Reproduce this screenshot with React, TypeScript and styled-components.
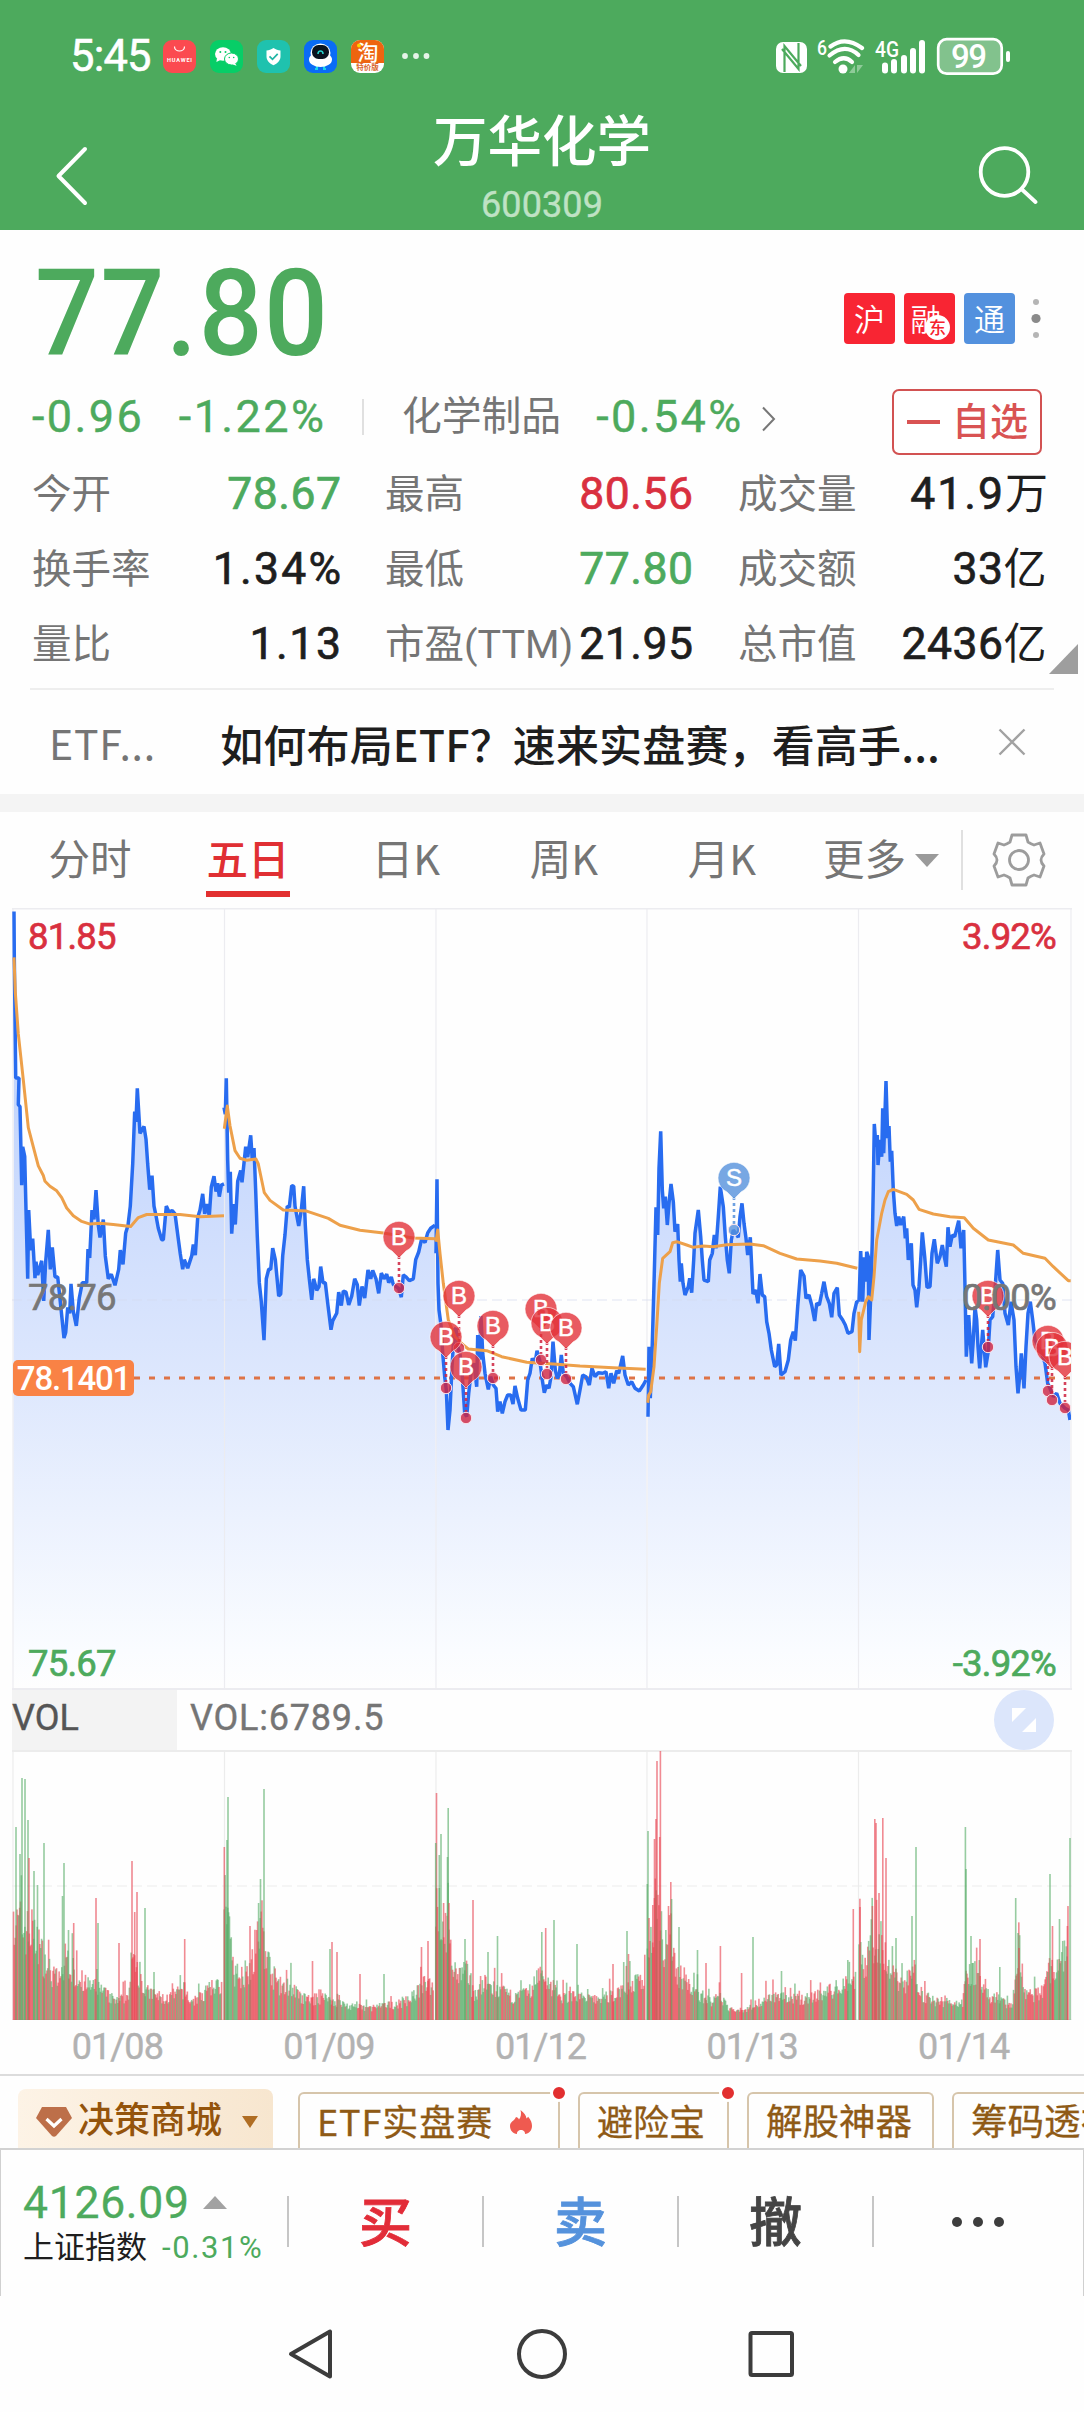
import React from "react";
import styled, { createGlobalStyle } from "styled-components";

const GREEN = "#4daa5d";
const RED = "#d9303f";
const INK = "#1e1e1e";
const GRAY = "#757575";
const NUM = `Roboto, "Noto Sans CJK SC", sans-serif`;
const HAN = `"Noto Sans CJK SC", Roboto, sans-serif`;

const Global = createGlobalStyle`
  * { box-sizing: border-box; }
  body { margin: 0; background: #fefefe; font-family: ${NUM}; }
  svg { display: block; flex: none; }
`;

const Screen = styled.main`
  width: 1084px;
  height: 2412px;
  overflow: hidden;
  display: flex;
  flex-direction: column;
  background: #fefefe;
`;

type TxtProps = {
  $size: number;
  $color?: string;
  $weight?: number;
  $ls?: number;
  $han?: boolean;
  $lh?: number;
  $stroke?: number;
  $ml?: number;
  $w?: number;
};

const Txt = styled.span<TxtProps>`
  font-family: ${(p) => (p.$han ? HAN : NUM)};
  font-size: ${(p) => p.$size}px;
  line-height: ${(p) => p.$lh ?? Math.round(p.$size * 1.2)}px;
  color: ${(p) => p.$color ?? INK};
  font-weight: ${(p) => p.$weight ?? 400};
  letter-spacing: ${(p) => p.$ls ?? 0}px;
  margin-left: ${(p) => p.$ml ?? 0}px;
  margin-right: ${(p) => -(p.$ls ?? 0)}px;
  ${(p) => (p.$w ? `width: ${p.$w}px;` : "")}
  -webkit-text-stroke: ${(p) => p.$stroke ?? 0}px currentColor;
  white-space: nowrap;
`;

/* ---------- header ---------- */

const Header = styled.header`
  height: 230px;
  flex: none;
  background: ${GREEN};
`;

const StatusBar = styled.div`
  height: 98px;
  padding: 15px 72px 0 70px;
  display: flex;
  align-items: center;
`;

const AppIcons = styled.div`
  display: flex;
  gap: 14px;
  margin-left: 12px;
`;

const StatusRight = styled.div`
  margin-left: auto;
`;

const TitleBar = styled.div`
  height: 132px;
  padding: 0 46px 0 54px;
  display: flex;
  justify-content: space-between;
`;

const TitleBlock = styled.div`
  display: flex;
  flex-direction: column;
  align-items: center;
  padding-top: 12px;
`;

const NavIcon = styled.div<{ $w: number }>`
  padding-top: 47px;
  width: ${(p) => p.$w}px;
`;

const AppIcon = ({ children }: { children: React.ReactNode }) => (
  <svg width="33" height="33" viewBox="0 0 33 33">{children}</svg>
);

function StatusIcons() {
  return (
    <>
      <AppIcons>
        <AppIcon>
          <rect width="33" height="33" rx="9" fill="#fb4a50" />
          <path d="M11.5 6.5c0 6 10 6 10 0" fill="none" stroke="#fff" strokeWidth="1.2" />
          <text x="16.5" y="21.5" textAnchor="middle" fontSize="5.6" fontWeight="700" fill="#fff" textLength="25" fontFamily="Roboto">HUAWEI</text>
        </AppIcon>
        <AppIcon>
          <rect width="33" height="33" rx="9" fill="#07ce67" />
          <ellipse cx="13" cy="14" rx="8" ry="6.8" fill="#fff" />
          <path d="M7 18l-.6 4 4-2z" fill="#fff" />
          <ellipse cx="21.5" cy="19" rx="7" ry="6" fill="#fff" stroke="#07ce67" strokeWidth="1" />
          <path d="M25 23l1.600 2.800-4.600-1.500z" fill="#fff" />
          <g fill="#07ce67"><circle cx="10.300" cy="12" r="1" /><circle cx="15.500" cy="12" r="1" /><circle cx="19.300" cy="17.500" r=".8" /><circle cx="23.700" cy="17.500" r=".8" /></g>
        </AppIcon>
        <AppIcon>
          <rect width="33" height="33" rx="9" fill="#1fc2ae" />
          <path d="M16.500 8c2.500 1.800 4.500 2.300 7 2.500v6c0 4-3 7-7 8.800-4-1.800-7-4.800-7-8.800v-6c2.500-.2 4.500-.7 7-2.500z" fill="#fff" />
          <path d="M12.500 16.300l3 3 5.200-5.500" fill="none" stroke="#1fb5a5" strokeWidth="1.700" />
        </AppIcon>
        <AppIcon>
          <rect width="33" height="33" rx="9" fill="#0a6cf6" />
          <path d="M13 25v4M20 25v4M11 29h3M19 29h3" stroke="#19d3e8" strokeWidth="2" />
          <ellipse cx="16.500" cy="13" rx="10" ry="9.500" fill="#fff" />
          <ellipse cx="16.500" cy="19.500" rx="11.500" ry="7.500" fill="#fff" />
          <rect x="8" y="5" width="17" height="14" rx="6.500" fill="#0b1420" />
          <path d="M14 14c0-4 5-4 5 0" fill="none" stroke="#27d5cf" strokeWidth="1.500" />
        </AppIcon>
        <AppIcon>
          <rect width="33" height="33" rx="9" fill="#fff" />
          <path d="M0 23V9a9 9 0 019-9h15a9 9 0 019 9v14z" fill="#ee6410" />
          <text x="17" y="20" textAnchor="middle" fontSize="21" fontWeight="500" fill="#fff" fontFamily="Noto Sans CJK SC">淘</text>
          <circle cx="8" cy="5.500" r="2" fill="#ffd400" />
          <text x="16.500" y="30" textAnchor="middle" fontSize="7.500" fontWeight="700" fill="#d9642a" fontFamily="Noto Sans CJK SC">特价版</text>
        </AppIcon>
        <svg width="40" height="33" viewBox="0 0 40 33" fill="#e6f4e8">
          <circle cx="7" cy="16" r="2.900" /><circle cx="18" cy="16" r="2.900" /><circle cx="28.500" cy="16" r="2.900" />
        </svg>
      </AppIcons>
      <StatusRight>
        <svg width="236" height="40" viewBox="776 36 236 40" fill="#fff">
          <rect x="776" y="41" width="31" height="31" rx="7" />
          <path d="M784.500 71V45l16.500 20M798.500 42v26l-16.500-20" fill="none" stroke={GREEN} strokeWidth="2.200" />
          <text x="817" y="54" fontSize="21" fontWeight="500" textLength="10" lengthAdjust="spacingAndGlyphs" fontFamily="Roboto">6</text>
          <g fill="none" stroke="#fff" strokeWidth="4.200" strokeLinecap="round">
            <path d="M830.500 45.500Q845 34.500 862 47" /><path d="M829.500 54.500Q845 41.500 858.500 54" /><path d="M835 61Q844 53.500 852 61" />
          </g>
          <circle cx="843" cy="68" r="4.500" />
          <path d="M855 64v8h-6zM857 72v-8l6 0z" fill="#8fcb99" />
          <text x="875" y="56" fontSize="22" fontWeight="500" textLength="24" lengthAdjust="spacingAndGlyphs" fontFamily="Roboto">4G</text>
          <rect x="882" y="61.500" width="6" height="11" rx="3" /><rect x="891" y="58" width="6" height="14.500" rx="3" />
          <rect x="901" y="54" width="6" height="18.500" rx="3" /><rect x="910" y="47" width="6" height="25.500" rx="3" />
          <rect x="919" y="39" width="6" height="33.500" rx="3" />
          <rect x="938.200" y="38.200" width="63.500" height="34.500" rx="8.500" fill="#82c28d" stroke="#fff" strokeWidth="2.700" />
          <rect x="1006" y="50" width="4" height="11" rx="2" />
          <text x="951" y="67" fontSize="33" fontWeight="500" textLength="36" fontFamily="Roboto">99</text>
        </svg>
      </StatusRight>
    </>
  );
}

/* ---------- quote ---------- */

const Quote = styled.section`
  height: 460px;
  flex: none;
  position: relative;
  padding: 0 38px 0 32px;
`;

const PriceRow = styled.div`
  height: 150px;
  display: flex;
  justify-content: space-between;
  align-items: flex-start;
`;

const Price = styled.div`
  margin-left: 3px;
  font: 500 121px/168px ${NUM};
  letter-spacing: 1.600px;
  color: ${GREEN};
  transform: scaleX(0.93);
  transform-origin: 0 50%;
`;

const Tags = styled.div`
  display: flex;
  gap: 9px;
  padding-top: 63px;
  margin-right: 2px;
`;

const Tag = styled.span<{ $bg: string; $shift?: number }>`
  position: relative;
  width: 51px;
  height: 51px;
  padding-right: ${(p) => p.$shift ?? 0}px;
  border-radius: 4px;
  background: ${(p) => p.$bg};
  color: #fff;
  font: 350 31px/50px ${HAN};
  text-align: center;
`;

const TagBadge = styled.i`
  position: absolute;
  left: 21px;
  top: 22px;
  width: 25px;
  height: 25px;
  border-radius: 50%;
  background: #fff;
  color: #f5222d;
  font: 500 17px/24px ${HAN};
`;

const ChangeRow = styled.div`
  height: 73px;
  display: flex;
  align-items: center;
`;

const VLine = styled.i<{ $h: number; $ml?: number; $mr?: number; $c?: string }>`
  flex: none;
  width: 2px;
  height: ${(p) => p.$h}px;
  margin-left: ${(p) => p.$ml ?? 0}px;
  margin-right: ${(p) => p.$mr ?? 0}px;
  background: ${(p) => p.$c ?? "#e0e0e0"};
`;

const Chevron = styled.svg`
  margin: 4px 0 0 20px;
`;

const WatchButton = styled.button`
  margin: 11px 4px 0 auto;
  width: 150px;
  height: 66px;
  padding: 0 0 0 13px;
  display: flex;
  align-items: center;
  gap: 12px;
  border: 2px solid #d25252;
  border-radius: 7px;
  background: #fff;
`;

const Minus = styled.i`
  width: 33px;
  height: 4px;
  background: #d95353;
`;

const Stats = styled.div`
  height: 225px;
  margin-top: 4px;
  display: grid;
  grid-template-columns: 309px 352px 353px;
  grid-template-rows: repeat(3, 75px);
`;

const Stat = styled.div<{ $pad: number }>`
  display: flex;
  justify-content: space-between;
  align-items: center;
  padding-left: ${(p) => p.$pad}px;
`;

const FoldCorner = styled.i`
  position: absolute;
  right: 6px;
  bottom: 16px;
  border-left: 29px solid transparent;
  border-bottom: 30px solid #9e9e9e;
`;

const Rule = styled.hr`
  margin: 6px -8px 0 -2px;
  border: 0;
  height: 2px;
  background: #eeeeee;
`;

type StatItem = { label: string; value: string; unit?: string; color?: string; ls?: number };
const STATS: StatItem[] = [
  { label: "今开", value: "78.67", color: GREEN },
  { label: "最高", value: "80.56", color: RED },
  { label: "成交量", value: "41.9", unit: "万", ls: 2 },
  { label: "换手率", value: "1.34%", ls: 2.2 },
  { label: "最低", value: "77.80", color: GREEN },
  { label: "成交额", value: "33", unit: "亿" },
  { label: "量比", value: "1.13", ls: 1.6 },
  { label: "市盈(TTM)", value: "21.95" },
  { label: "总市值", value: "2436", unit: "亿" },
];
const PAD = [0, 44, 45];

/* ---------- promo + tabs ---------- */

const Promo = styled.section`
  height: 104px;
  flex: none;
  display: flex;
  align-items: center;
  padding: 1px 58px 0 49px;
`;

const CloseIcon = styled.svg`
  margin: 0 0 2px auto;
`;

const Band = styled.div`
  height: 18px;
  flex: none;
  background: #f4f4f4;
`;

const Tabs = styled.nav`
  height: 96px;
  flex: none;
  display: flex;
  align-items: center;
  padding: 0 37px 0 11px;
`;

const Tab = styled.div<{ $on?: boolean }>`
  width: 158px;
  display: flex;
  justify-content: center;
  position: relative;
  padding-bottom: 7px;
  font: ${(p) => (p.$on ? 500 : 400)} 41.500px/60px ${HAN};
  color: ${(p) => (p.$on ? "#e02f33" : GRAY)};
  &::after {
    content: "";
    position: absolute;
    bottom: -3px;
    width: 84px;
    height: 6px;
    background: ${(p) => (p.$on ? "#e23030" : "transparent")};
  }
`;

const More = styled.div`
  margin-left: 22px;
  display: flex;
  align-items: center;
  gap: 9px;
  font: 400 41.500px/60px ${HAN};
  color: ${GRAY};
`;

const MoreLabel = styled.span`
  padding-bottom: 7px;
`;

const Gear = styled.svg`
  margin-left: auto;
`;

/* ---------- charts ---------- */

const PriceChart = styled.section`
  height: 782px;
  flex: none;
  position: relative;
`;

const ChartLabel = styled.span<{ $top: number; $left?: boolean; $c: string }>`
  position: absolute;
  top: ${(p) => p.$top}px;
  ${(p) => (p.$left ? "left: 28px;" : "right: 28px;")}
  font: 400 36.500px/42px ${NUM};
  letter-spacing: -0.8px;
  -webkit-text-stroke: 0.7px currentColor;
  color: ${(p) => p.$c};
`;

const CostTag = styled.span`
  position: absolute;
  left: 13px;
  top: 452px;
  width: 121px;
  height: 36px;
  border-radius: 5px;
  background: #f98245;
  color: #fff;
  font: 500 33px/37px ${NUM};
  letter-spacing: -1.200px;
  text-align: center;
`;

const VolHead = styled.div`
  height: 60px;
  flex: none;
  display: flex;
  align-items: center;
  padding: 0 30px 0 12px;
`;

const VolName = styled.div`
  width: 165px;
  height: 60px;
  margin-right: 13px;
  background: #f3f3f3;
  display: flex;
  align-items: center;
  padding-bottom: 4px;
`;

const VolValue = styled.div`
  display: flex;
  padding-bottom: 4px;
`;

const Expand = styled.div`
  margin-left: auto;
`;

const VolChart = styled.section`
  height: 270px;
  flex: none;
`;

const Dates = styled.div`
  height: 54px;
  flex: none;
  display: grid;
  grid-template-columns: repeat(5, 211.6px);
  padding: 1px 0 0 12px;
  align-items: center;
  justify-items: center;
`;

const GRID_X = [13, 224.5, 436, 647, 858.5, 1071];

type Trace = { ox: number; oy: number; sx: number; sy: number; d: string };
const panelA = { ox: 0, oy: 900, sx: 3, sy: 2.6133 };
const panelB = { ox: 380, oy: 1000, sx: 3, sy: 3 };
const panelC = { ox: 720, oy: 1000, sx: 3, sy: 3 };

const toPoints = (parts: Trace[]): string =>
  parts
    .flatMap((t) =>
      t.d.trim().split(/\s+/).map((p) => {
        const [x, y] = p.split(",").map(Number);
        return `${(t.ox + x / t.sx).toFixed(1)},${(t.oy + y / t.sy).toFixed(1)}`;
      })
    )
    .join(" ");

const PRICE = [
  [{ ...panelA, d: "42,30 43,150 47,465 57,465 55,535 60,540 65,745 68,645 74,670 78,810 83,990 86,810 92,915 98,885 105,988 108,945 113,980 125,943 131,1048 137,945 145,862 151,965 157,908 165,985 173,985 181,1050 192,1145 197,1130 203,1065 209,1080 213,1003 220,1075 229,1113 238,1040 247,1000 260,1000 264,912 269,935 276,810 282,835 288,758 295,850 300,882 310,835 316,930 325,990 334,978 345,1007 356,965 361,915 369,952 377,870 384,850 391,800 398,690 404,553 408,580 412,492 420,610 432,592 438,625 443,690 449,757 456,720 462,800 468,825 475,858 485,888 490,888 499,800 507,815 517,812 525,820 534,880 541,925 548,965 553,940 563,962 575,930 580,900 586,928 593,830 600,810 608,768 614,820 620,795 628,825 634,750 642,722 648,762 653,740 658,775 664,745 672,742" }],
  [{ ...panelA, d: "672,542 676,560 679,466 683,680 686,765 691,710 695,872 701,795 706,848 713,735 722,707 726,738 737,645 743,672 752,615 757,680 762,648 767,760 772,880 778,1000 784,1050 792,1150 799,990 806,965 812,965 818,910 826,940 836,1035 842,1030 848,930 855,875 862,800 868,803 875,747 881,748 885,800 896,852 904,810 911,748 916,850 922,940 928,990 935,1045 941,990 950,1020 957,1010 962,958 969,1000 976,1000 984,1060 993,1123 998,1100 1010,1080 1016,1025 1024,1060 1030,1022 1038,1025 1046,1058 1055,1035 1064,990 1072,1005 1078,1060 1086,1010 1094,1040 1104,967 1112,990 1118,968 1128,990 1136,1028 1144,975 1152,990 1160,978 1166,1000 1174,985 1180,1005 1196,1015 1204,1038 1210,980 1218,985 1228,995 1240,990 1247,940 1256,920 1265,885 1275,895 1283,870 1292,858 1305,850" }],
  [{ ...panelB, d: "168,760 171,538 174,850 177,930 183,975 188,1060 194,1130 199,1170 204,1290 210,1230 216,1100 223,990 228,985 233,1040 240,1060 247,1130 254,1240 260,1250 266,1180 273,1120 282,1090 290,1160 293,1005 299,1080 303,948 308,1060 315,1120 325,1168 332,1130 340,1155 348,1165 353,1235 360,1205 367,1240 375,1205 383,1185 392,1185 399,1212 405,1158 413,1195 423,1230 436,1230 443,1140 450,1120 457,1075 465,1090 471,1052 480,1085 487,1140 493,1178 500,1155 507,1165 513,1130 519,1025 526,1110 532,1135 538,1125 544,1065 550,1120 560,1130 570,1150 580,1160 592,1213 600,1170 608,1125 618,1130 628,1155 636,1105 645,1130 655,1118 668,1120 678,1115 686,1165 693,1120 701,1150 710,1112 716,1120 728,1068 735,1125 745,1155 755,1145 765,1165 778,1173 790,1155 798,1140" }],
  [{ ...panelB, d: "804,1250 807,1040 811,1195 817,1030 823,820 828,622 833,705 837,505 842,394 847,570 851,625 856,590 862,675 867,610 873,552 880,605 885,695 893,672 897,780 901,845 904,790 909,850 915,885 925,860 929,835 935,878 941,780 945,700 955,630 962,710 967,780 972,840 985,845 989,780 997,760 1003,705 1008,745 1015,650 1021,560 1030,620 1036,710 1042,780 1048,820 1054,720 1060,690 1068,700 1075,712 1080,650 1086,610 1092,670 1098,715 1103,765 1111,712 1116,820" },
   { ...panelC, d: "99,882 107,870 114,910 120,822 127,885 134,890 140,965 147,1000 154,1050 164,1100 170,1095 176,1032 183,1125 195,1115 205,1080 212,1020 220,995 226,1022 233,920 242,810 252,828 258,895 267,885 275,915 284,963 290,910 298,915 305,880 312,845 320,890 328,910 335,952 342,880 352,863 358,945 368,960 376,975 384,1000 396,995 402,940 410,905 416,905" }],
  [{ ...panelC, d: "417,905 422,753 428,905 433,772 437,845 440,755 445,770 447,1020 452,890 457,720 460,560 463,372 468,440 472,405 474,495 480,420 485,470 488,325 491,460 498,243 503,415 507,378 511,485 515,452 520,570 525,640 530,678 536,650 542,675 551,650 556,715 560,685 565,780 574,730 579,855 585,870 590,922 597,860 602,780 607,697 614,770 621,862 630,860 636,760 643,718 652,790 660,770 667,735 673,770 679,800 684,682 690,740 697,705 704,710 716,662 723,745 731,690 735,860 739,1070 746,945 755,1090 760,1020 765,920 770,960 774,1040 779,1105 788,990 797,1102 804,1060 810,960 818,950 825,870 833,750 840,840 848,850 855,940 865,975 873,905 882,960 888,1100 894,1180 900,1120 904,1060 908,1110 912,1165 918,1040 924,940 931,905 938,960 945,1020 955,1040 965,1060 975,1090 983,1150 990,1165 1000,1190 1010,1180 1020,1210 1035,1225 1045,1230 1050,1260" }],
];

const AVERAGE = [
  [{ ...panelA, d: "42,150 46,240 55,350 70,470 85,595 100,645 115,695 130,720 135,735 150,748 170,760 185,778 200,805 220,825 245,840 270,847 300,845 340,848 392,853 415,830 440,822 480,822 540,822 600,828 672,825" }],
  [{ ...panelA, d: "673,598 682,538 690,590 705,655 720,675 740,680 768,677 775,690 793,765 810,785 850,810 920,813 985,832 1020,850 1080,863 1150,870 1240,883 1305,885" }],
  [{ ...panelB, d: "168,725 173,690 180,760 190,850 205,960 225,1010 250,1035 265,1047 320,1052 365,1070 440,1087 520,1092 600,1098 700,1103 797,1108" }],
  [{ ...panelB, d: "803,1208 806,1185 812,1175 822,1100 830,980 838,850 848,775 870,755 878,728 890,725 920,735 940,742 970,738 1000,740 1040,734 1110,732 1150,737" },
   { ...panelC, d: "180,760 230,777 300,783 350,790 412,805" }],
  [{ ...panelC, d: "416,935 419,1055 424,960 437,905 445,890 455,900 462,830 470,720 485,640 495,600 505,575 520,568 560,583 580,600 597,628 640,642 690,650 733,653 760,685 805,720 880,735 910,760 975,775 1000,800 1045,842 1052,842" }],
];

const PINS: [number, number, number, string?][] = [
  [399, 1237, 1288], [459, 1296, 1348], [446, 1337, 1388], [466, 1367, 1418], [493, 1326, 1378],
  [541, 1309, 1360], [547, 1323, 1374], [566, 1328, 1379], [734, 1178, 1230, "S"],
  [988, 1296, 1347], [1048, 1341, 1391], [1052, 1348, 1400], [1065, 1357, 1408],
];

function Pin({ x, y, dot, kind }: { x: number; y: number; dot: number; kind: string }) {
  const c = kind === "S" ? "#5591dc" : "#e2323a";
  const end = kind === "S" ? "#5591dc" : "#cf2340";
  return (
    <g>
      <path d={`M${x} ${y + 19}V${dot - 5}`} stroke={end} strokeWidth="2.600" strokeDasharray="3 3" opacity=".85" />
      <circle cx={x} cy={dot} r="5.700" fill={end} fillOpacity=".8" stroke="#fbe3ea" strokeWidth="1" />
      <path
        d={`M${x - 7} ${y + 14}A16 15.600 0 1 1 ${x + 7} ${y + 14}L${x} ${y + 21}Z`}
        fill={c} fillOpacity=".8" stroke="#fff" strokeOpacity=".6" strokeWidth="1"
      />
      <text x={x} y={y + 8} textAnchor="middle" fontSize="24" fontFamily="Liberation Sans" fill="#fff" stroke="#fff" strokeWidth=".5">{kind}</text>
    </g>
  );
}

function PriceDrawing() {
  return (
    <svg width="1084" height="782" viewBox="0 908 1084 782">
      <defs>
        <linearGradient id="area" gradientUnits="userSpaceOnUse" x1="0" y1="908" x2="0" y2="1690">
          <stop offset="0" stopColor="#b5ccff" />
          <stop offset=".25" stopColor="#c4d6fd" />
          <stop offset=".6" stopColor="#dde7fd" />
          <stop offset=".95" stopColor="#fafcff" />
          <stop offset="1" stopColor="#fefefe" />
        </linearGradient>
        <clipPath id="plot"><rect x="12" y="908" width="1059" height="782" /></clipPath>
      </defs>
      <g clipPath="url(#plot)">
        {PRICE.map((day, i) => (
          <polygon key={i} fill="url(#area)" points={`${GRID_X[i]},1690 ${toPoints(day)} ${GRID_X[i + 1]},1690`} />
        ))}
      </g>
      <g stroke="#ececf0" strokeWidth="1.200">
        {GRID_X.map((x) => <path key={x} d={`M${x} 908V1690`} />)}
        <path d="M12 908.500H1072" strokeWidth="2" />
        <path d="M12 1300H1072" strokeDasharray="10 5" stroke="#d5dcee" strokeOpacity=".7" />
        <path d="M12 1689H1072" strokeWidth="2" />
      </g>
      <path d="M134 1378H1071" stroke="#de7346" strokeWidth="3.200" strokeDasharray="6 9" />
      <g fill="none" clipPath="url(#plot)" strokeLinejoin="bevel">
        {PRICE.map((day, i) => <polyline key={i} points={toPoints(day)} stroke="#286cf0" strokeWidth="3.500" />)}
        {AVERAGE.map((day, i) => <polyline key={i} points={toPoints(day)} stroke="#eda04a" strokeWidth="3" strokeLinejoin="round" />)}
      </g>
      <g clipPath="url(#plot)">
        {PINS.map(([x, y, dot, kind]) => <Pin key={`${x}-${y}`} x={x} y={y} dot={dot} kind={kind ?? "B"} />)}
      </g>
    </svg>
  );
}

/* typical bar height along the time axis, per session: x:height */
const BASE = "13:90 20:95 30:85 38:75 46:55 54:42 62:38 66:65 72:50 85:35 95:32 103:28 110:22 118:18 128:25 135:65 140:40 145:28 155:25 165:20 175:25 185:30 190:18 200:22 210:30 222:35 225:120 229:80 235:45 245:45 255:60 260:95 265:70 272:45 283:30 290:35 300:22 310:20 325:22 335:18 350:13 370:12 385:14 400:16 412:22 425:35 434:35 436:130 440:100 446:90 450:70 456:40 465:50 475:25 485:35 500:28 515:22 530:28 540:45 550:35 560:22 575:24 590:20 605:22 615:25 625:35 635:35 645:40 648:80 652:75 655:130 660:110 664:70 668:90 672:80 678:45 690:32 700:25 712:18 720:22 730:10 745:10 755:15 770:25 785:22 800:20 820:25 835:30 850:40 857:40 859:70 866:55 873:80 880:80 886:60 893:45 905:35 915:50 922:25 935:18 950:18 963:16 966:50 975:45 985:25 1000:20 1012:12 1018:60 1025:25 1040:25 1052:50 1060:60 1071:70"
  .split(" ").map((p) => p.split(":").map(Number));

const PEAKS = "16:193g 22:242g 25:241g 28:200g 29:162r 20:166g 34:149g 37.5:135g 44:177g 64:157g 62.5:124g 68.5:90g 73.7:97r 96:122r 98:97g 119:77r 132:159r 134.7:108r 137:128r 145:112g 154:48g 184.7:81r 224.3:173r 228:223g 227:180g 250:94r 264:231g 260.5:141g 258.6:117g 312.5:59r 332:78r 330:71g 337:68r 360:46r 384:46g 421.5:73r 428:79r 436.5:227r 435.7:177g 441:186g 439.3:165g 448.2:212g 447.5:163g 443.6:117r 449:117r 473:120r 465:81g 497.5:84g 488:68g 541.8:88g 545.7:92r 554:100g 577:76g 627:89g 628.5:66r 613:56r 648:189g 649:102r 647.3:136g 660.4:269r 657:259r 656:201r 654.5:181r 659.7:183r 652.8:115r 670.8:138r 671.6:121g 679:93g 697.5:70g 706:57r 720.4:74r 753:83g 741.6:47r 781.5:49g 853.3:111r 847.8:60g 860:113r 874.8:201r 876:197r 882.8:202r 886:162r 879:127r 872.4:114r 916:173g 912:104g 896:82g 965.4:193g 966:151g 971:84g 980:81r 999.8:53g 1015.7:122g 1018:87g 1019:72r 1050:146g 1052.5:94r 1059.5:101g 1067.4:94r 1070:182g"
  .split(" ").map((p) => {
    const [x, v] = p.split(":");
    return { x: Number(x), h: parseFloat(v), up: v.endsWith("r") };
  });

function volumeBars() {
  let seed = 7;
  const rnd = () => (seed = (seed * 16807) % 2147483647) / 2147483647;
  const bars: { x: number; h: number; up: boolean }[] = [];
  let k = 0;
  for (let x = 13.5; x < 1070.5; x += 0.878) {
    if (GRID_X.some((g) => x > g - 2.2 && x < g - 0.3)) continue;
    while (k < BASE.length - 2 && BASE[k + 1][0] < x) k++;
    const [x0, h0] = BASE[k];
    const [x1, h1] = BASE[k + 1];
    const t = Math.min(1, Math.max(0, (x - x0) / (x1 - x0)));
    const h = (h0 + (h1 - h0) * t) * (0.7 + rnd() * 0.6 + (rnd() > 0.9 ? 0.5 : 0));
    const bias = 0.55 + 0.28 * Math.sin(x / 13) * Math.cos(x / 37);
    bars.push({ x, h, up: rnd() < bias });
  }
  return [...bars, ...PEAKS];
}

function VolumeDrawing() {
  return (
    <svg width="1084" height="270" viewBox="0 1750 1084 270">
      <g stroke="#ececec" strokeWidth="1.200">
        {GRID_X.map((x) => <path key={x} d={`M${x} 1750V2020`} />)}
        <path d="M12 1751H1072" strokeWidth="2" />
        <path d="M12 1886H1072" strokeDasharray="10 5" />
        <path d="M12 2019.500H1072" />
      </g>
      {volumeBars().map((b, i) => (
        <rect key={i} x={b.x - 0.8} y={2020 - b.h} width="1.600" height={b.h} fill={b.up ? "#e84450" : "#57ad68"} fillOpacity=".62" />
      ))}
    </svg>
  );
}

/* ---------- footer ---------- */

const Shortcuts = styled.section`
  height: 76px;
  flex: none;
  border-top: 2px solid #dcdcdc;
  border-bottom: 2px solid #d2d2d2;
  display: flex;
  align-items: flex-end;
  gap: 18px;
  padding-left: 18px;
  overflow: hidden;
`;

const Mall = styled.div`
  flex: none;
  width: 255px;
  height: 59px;
  margin-right: 7px;
  padding: 6px 15px 0 18px;
  display: flex;
  align-items: center;
  justify-content: space-between;
  border-radius: 8px 8px 0 0;
  background: linear-gradient(90deg, #fdf3e6, #f7e6cf);
`;

const MallName = styled.div`
  display: flex;
  align-items: center;
  gap: 6px;
`;

const Chip = styled.div<{ $w: number }>`
  flex: none;
  position: relative;
  width: ${(p) => p.$w}px;
  height: 56px;
  padding: 0 17px 2px;
  display: flex;
  align-items: center;
  justify-content: space-between;
  border: 2px solid #d6c5ab;
  border-bottom: 0;
  border-radius: 6px 6px 0 0;
`;

const Dot = styled.i`
  position: absolute;
  right: -10px;
  top: -10px;
  width: 18px;
  height: 18px;
  border-radius: 50%;
  border: 3px solid #fff;
  background: #e22f30;
`;

const Flame = styled.svg`
  margin: 4px 9px 0 0;
`;

const TradeBar = styled.section`
  height: 146px;
  flex: none;
  border: 1px solid #d0d0d0;
  border-top: 0;
  border-bottom: 0;
  padding: 0 0 3px 22px;
  display: flex;
  align-items: center;
`;

const Index = styled.div`
  width: 264px;
  display: flex;
  flex-direction: column;
`;

const Line = styled.div<{ $gap: number }>`
  display: flex;
  align-items: center;
  gap: ${(p) => p.$gap}px;
`;

const Action = styled.div<{ $c: string }>`
  width: 193px;
  color: ${(p) => p.$c};
  font: 500 53px/60px ${NUM};
  -webkit-text-stroke: 0.8px currentColor;
  display: flex;
  justify-content: center;
  padding-top: 5px;
`;

const MoreDots = styled.div`
  padding-left: 68px;
`;

const SysNav = styled.nav`
  height: 116px;
  flex: none;
`;

const BROWN = "#8f5a16";

export default function App() {
  return (
    <Screen>
      <Global />
      <Header>
        <StatusBar>
          <Txt $size={43.5} $color="#fff" $ls={-0.8} $stroke={0.6}>5:45</Txt>
          <StatusIcons />
        </StatusBar>
        <TitleBar>
          <NavIcon $w={52}>
            <svg width="36" height="62" viewBox="0 0 36 62">
              <path d="M31 4L4.500 31 31 58" fill="none" stroke="#fff" strokeWidth="4" strokeLinecap="round" strokeLinejoin="round" />
            </svg>
          </NavIcon>
          <TitleBlock>
            <Txt $size={54.5} $color="#fff" $weight={500} $lh={64}>万华化学</Txt>
            <Txt $size={36} $color="#bfe2c4" $ls={0.1} $lh={62} $stroke={0.4}>600309</Txt>
          </TitleBlock>
          <NavIcon $w={60}>
            <svg width="60" height="62" viewBox="978 145 60 62" fill="none" stroke="#fff" strokeWidth="3.800" strokeLinecap="round">
              <circle cx="1004.500" cy="172" r="23.800" />
              <path d="M1022 189.500l13.500 12.500" />
            </svg>
          </NavIcon>
        </TitleBar>
      </Header>

      <Quote>
        <PriceRow>
          <Price>77.80</Price>
          <Tags>
            <Tag $bg="#f82533">沪</Tag>
            <Tag $bg="#f82533" $shift={7}>融<TagBadge>东</TagBadge></Tag>
            <Tag $bg="#5391de">通</Tag>
            <svg width="20" height="51" viewBox="0 0 20 51" fill="#b5b5b5">
              <circle cx="12" cy="9" r="3" /><circle cx="12" cy="25.500" r="4.600" fill="#8a8a8a" /><circle cx="12" cy="42" r="3" />
            </svg>
          </Tags>
        </PriceRow>
        <ChangeRow>
          <Txt $size={45} $color={GREEN} $ls={2.4} $stroke={0.4}>-0.96</Txt>
          <Txt $size={45} $color={GREEN} $ls={2.4} $stroke={0.4} $ml={37}>-1.22%</Txt>
          <VLine $h={36} $ml={38} $mr={38} />
          <Txt $size={39.8} $color={GRAY}>化学制品</Txt>
          <Txt $size={45} $color={GREEN} $ls={2.4} $stroke={0.4} $ml={35}>-0.54%</Txt>
          <Chevron width="16" height="26" viewBox="0 0 16 26">
            <path d="M2 1.500L13 13 2 24.500" fill="none" stroke="#777" strokeWidth="2" />
          </Chevron>
          <WatchButton>
            <Minus />
            <Txt $size={38} $color="#d95353" $weight={500}>自选</Txt>
          </WatchButton>
        </ChangeRow>
        <Stats>
          {STATS.map(({ label, value, unit, color, ls }, i) => (
            <Stat key={label} $pad={PAD[i % 3]}>
              <Txt $size={39.5} $color={GRAY}>{label}</Txt>
              <Txt $size={44.5} $color={color} $stroke={0.7} $ls={ls ?? 0.5}>
                {value}
                {unit && <Txt $size={43} $weight={400}>{unit}</Txt>}
              </Txt>
            </Stat>
          ))}
        </Stats>
        <FoldCorner />
        <Rule />
      </Quote>

      <Promo>
        <Txt $size={41} $color={GRAY} $han $ls={0.8} $w={172}>ETF...</Txt>
        <Txt $size={43} $han $weight={500} $ls={0.15}>如何布局ETF？速来实盘赛，看高手...</Txt>
        <CloseIcon width="28" height="28" viewBox="0 0 28 28">
          <path d="M1.500 1.500l25 25M26.500 1.500l-25 25" stroke="#a2a2a2" strokeWidth="2.400" />
        </CloseIcon>
      </Promo>
      <Band />
      <Tabs>
        <Tab>分时</Tab>
        <Tab $on>五日</Tab>
        <Tab>日K</Tab>
        <Tab>周K</Tab>
        <Tab>月K</Tab>
        <More>
          <MoreLabel>更多</MoreLabel>
          <svg width="24" height="13" viewBox="0 0 24 13"><path d="M0 0h24L12 13z" fill="#9a9a9a" /></svg>
        </More>
        <VLine $h={60} $ml={22} />
        <Gear width="56" height="56" viewBox="-28 -28 56 56" fill="none" stroke="#9c9c9c" strokeWidth="2.800" strokeLinejoin="round">
          <path d="M-7-25H7L9-18Q12-16 15-15L21-17L25-6Q19 0 25 6L21 17L15 15Q12 16 9 18L7 25H-7L-9 18Q-12 16-15 15L-21 17L-25 6Q-19 0-25-6L-21-17L-15-15Q-12-16-9-18Z" />
          <circle r="9.500" />
        </Gear>
      </Tabs>

      <PriceChart>
        <PriceDrawing />
        <CostTag>78.1401</CostTag>
        <ChartLabel $left $top={8} $c={RED}>81.85</ChartLabel>
        <ChartLabel $top={8} $c={RED}>3.92%</ChartLabel>
        <ChartLabel $left $top={369} $c="#777">78.76</ChartLabel>
        <ChartLabel $top={369} $c="#777">0.00%</ChartLabel>
        <ChartLabel $left $top={735} $c={GREEN}>75.67</ChartLabel>
        <ChartLabel $top={735} $c={GREEN}>-3.92%</ChartLabel>
      </PriceChart>
      <VolHead>
        <VolName><Txt $size={36} $color="#555" $stroke={0.4}>VOL</Txt></VolName>
        <VolValue><Txt $size={36} $color={GRAY} $ls={0.8} $stroke={0.4}>VOL:6789.5</Txt></VolValue>
        <Expand>
          <svg width="60" height="60" viewBox="994 1690 60 60">
            <circle cx="1024" cy="1720" r="30" fill="#dce6fb" />
            <path d="M1012 1708h14l-14 14zM1036 1718v14h-14z" fill="#fff" />
          </svg>
        </Expand>
      </VolHead>
      <VolChart><VolumeDrawing /></VolChart>
      <Dates>
        {["01/08", "01/09", "01/12", "01/13", "01/14"].map((d) => (
          <Txt key={d} $size={36} $color="#b2b2b2" $ls={-0.9} $stroke={0.4}>{d}</Txt>
        ))}
      </Dates>

      <Shortcuts>
        <Mall>
          <MallName>
            <svg width="36" height="30" viewBox="0 0 36 30">
              <path d="M6 0h24l6 11-16 18q-2 1.500-4 0L0 11z" fill="#bd6f49" />
              <path d="M10.500 12l7.500 7 7.500-7" fill="none" stroke="#fff" strokeWidth="3.200" />
            </svg>
            <Txt $size={36} $color="#94540c" $weight={500}>决策商城</Txt>
          </MallName>
          <svg width="16" height="12" viewBox="0 0 16 12"><path d="M0 0h16L8 12z" fill="#b06e24" /></svg>
        </Mall>
        <Chip $w={262}>
          <Txt $size={36} $color={BROWN} $han $ls={0.9} $stroke={0.3}>ETF实盘赛</Txt>
          <Flame width="22" height="24" viewBox="0 0 22 24">
            <path d="M10.500 0c4 3 5.500 5.500 6 8.500l1.700-1.800C21 10 22 13 22 16c0 4.500-3 7.500-7 8 .3-2-1.500-4-4-4s-4.300 2-4 4c-4-.5-7-3.500-7-8C0 11.500 4.500 11 6 7c2 .5 2.500 1.500 3 2.500C11 7 11.500 3.500 10.500 0z" fill="#ef5a50" />
          </Flame>
          <Dot />
        </Chip>
        <Chip $w={151}>
          <Txt $size={36} $color={BROWN} $han $stroke={0.3}>避险宝</Txt>
          <Dot />
        </Chip>
        <Chip $w={187}>
          <Txt $size={36.5} $color={BROWN} $han $stroke={0.3}>解股神器</Txt>
        </Chip>
        <Chip $w={187}>
          <Txt $size={36.5} $color={BROWN} $han $stroke={0.3}>筹码透视</Txt>
        </Chip>
      </Shortcuts>

      <TradeBar>
        <Index>
          <Line $gap={14}>
            <Txt $size={44.5} $color={GREEN} $ls={0.7} $lh={52} $stroke={0.3}>4126.09</Txt>
            <svg width="24" height="13" viewBox="0 0 24 13"><path d="M0 13h24L12 0z" fill="#a2a2a2" /></svg>
          </Line>
          <Line $gap={15}>
            <Txt $size={31} $lh={38}>上证指数</Txt>
            <Txt $size={31} $color={GREEN} $ls={1.6} $lh={36}>-0.31%</Txt>
          </Line>
        </Index>
        <VLine $h={51} $c="#c6c6c6" />
        <Action $c="#e22c38">买</Action>
        <VLine $h={51} $c="#c6c6c6" />
        <Action $c="#5592dc">卖</Action>
        <VLine $h={51} $c="#c6c6c6" />
        <Action $c="#444">撤</Action>
        <VLine $h={51} $c="#c6c6c6" />
        <MoreDots>
          <svg width="74" height="12" viewBox="0 0 74 12" fill="#3d3d3d">
            <circle cx="15" cy="6" r="5" /><circle cx="36" cy="6" r="5" /><circle cx="57" cy="6" r="5" />
          </svg>
        </MoreDots>
      </TradeBar>

      <SysNav>
        <svg width="1084" height="116" viewBox="0 2296 1084 116" fill="none" stroke="#3c3c3c" strokeWidth="4" strokeLinejoin="round">
          <path d="M291 2354L330 2331.500V2376.500Z" />
          <circle cx="542" cy="2354" r="23" />
          <rect x="750.500" y="2333" width="41.500" height="42" rx="1.500" />
        </svg>
      </SysNav>
    </Screen>
  );
}
